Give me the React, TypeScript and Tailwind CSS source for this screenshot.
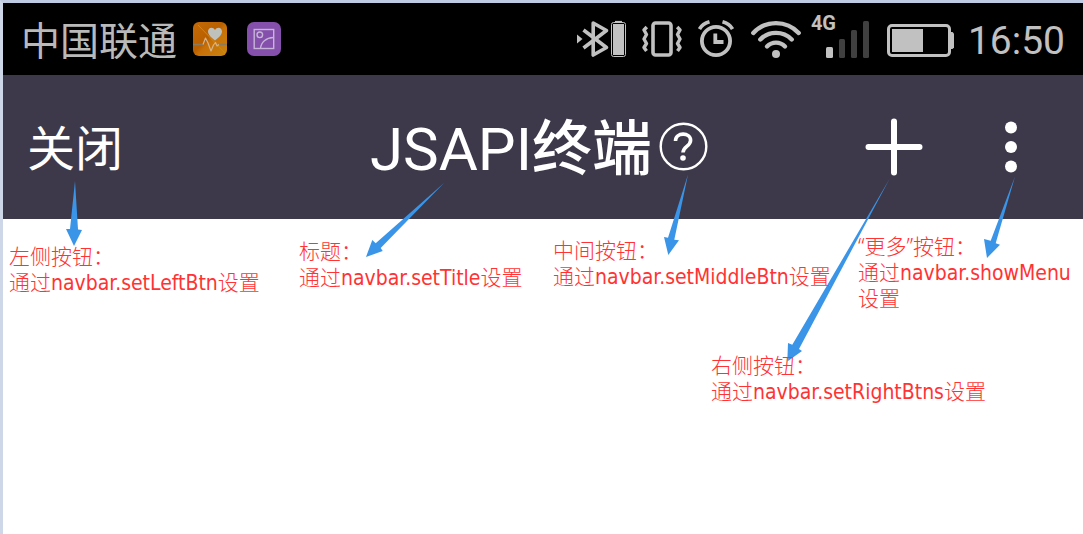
import React from "react";

type Line = { before?: string; api?: string; after?: string };
type Note = { id: string; place: string; lines: Line[] };

const notes: Note[] = [
  {
    id: "left",
    place: "left-[9px] top-[243px]",
    lines: [{ before: "左侧按钮：" }, { before: "通过", api: "navbar.setLeftBtn", after: "设置" }],
  },
  {
    id: "title",
    place: "left-[299px] top-[238px]",
    lines: [{ before: "标题：" }, { before: "通过", api: "navbar.setTitle", after: "设置" }],
  },
  {
    id: "middle",
    place: "left-[553px] top-[237px]",
    lines: [{ before: "中间按钮：" }, { before: "通过", api: "navbar.setMiddleBtn", after: "设置" }],
  },
  {
    id: "more",
    place: "left-[858px] top-[233px]",
    lines: [{ before: "“更多”按钮：" }, { before: "通过", api: "navbar.showMenu" }, { after: "设置" }],
  },
  {
    id: "right",
    place: "left-[711px] top-[352px]",
    lines: [{ before: "右侧按钮：" }, { before: "通过", api: "navbar.setRightBtns", after: "设置" }],
  },
];

const arrows = [
  "75,181 78,229.5 82,230 74,246 66,229 70,229",
  "444,183 380.7,248 382.7,251 366,257 372.3,240 375.7,243.3",
  "688,174.5 674.3,239.7 679,240.3 668.3,255 664,237 668,237.7",
  "1015,176.5 995.7,243.3 1000,244.7 987,258 984,239 990.7,240.7",
  "889.5,179 799,349 802,351 787.3,361.5 788,343 792.3,344.7",
];

function HealthIcon() {
  return (
    <svg className="size-[34px]" viewBox="0 0 34 34" aria-hidden="true">
      <defs>
        <linearGradient id="health" x1="0" y1="0" x2="1" y2="1">
          <stop offset="0" stopColor="#c56a05" />
          <stop offset="0.45" stopColor="#b95f00" />
          <stop offset="0.55" stopColor="#c87008" />
          <stop offset="1" stopColor="#c98410" />
        </linearGradient>
      </defs>
      <rect width="34" height="34" rx="6" fill="url(#health)" />
      <path d="M5 3 L32 31" stroke="#cf8a10" strokeWidth="1" />
      <path d="M0 22.5 H10 M26 22.5 H34" stroke="#8b7a5c" strokeWidth="1.4" />
      <path d="M10 22.5 L12.5 16 L15 21 L18 29 L20.5 23 L22.5 20.5 L24 24 L26 22.5" fill="none" stroke="#d5b48a" strokeWidth="1.2" strokeLinejoin="round" />
      <path d="M22 18.5 C19 16 15 13 15 9.5 C15 5.3 20 4.2 22 8 C24 4.2 29 5.3 29 9.5 C29 13 25 16 22 18.5 Z" fill="#bfc1bd" />
    </svg>
  );
}

function GalleryIcon() {
  return (
    <svg className="size-[34px]" viewBox="0 0 34 34" fill="none" stroke="#c7b4d8" strokeWidth="1.4" aria-hidden="true">
      <rect width="34" height="34" rx="7" fill="#8450ab" stroke="none" />
      <rect x="7.2" y="7.5" width="19.5" height="19" />
      <circle cx="12.8" cy="12.8" r="2.8" />
      <path d="M13.5 26.5 C14 20 19 15.8 26.5 15.5" />
    </svg>
  );
}

function BluetoothIcon() {
  return (
    <svg className="h-10 w-[50px]" viewBox="0 0 50 40" fill="none" stroke="#c1c1c1" aria-hidden="true">
      <path d="M1 15.5 L6.5 20 L1 24.5 Z" fill="#c1c1c1" stroke="none" />
      <path d="M7.5 11 L30.5 28.5 L17.2 36 V4 L30.5 11.5 L7.5 29" strokeWidth="3.6" strokeLinejoin="round" />
      <rect x="35.5" y="3.5" width="14" height="34" rx="2" strokeWidth="1" />
      <path d="M39 2.5 H46" strokeWidth="1.2" />
      <rect x="37" y="5" width="11" height="31" fill="#c1c1c1" stroke="none" />
    </svg>
  );
}

function VibrateIcon() {
  return (
    <svg className="h-10 w-10" viewBox="0 0 40 40" fill="none" stroke="#c1c1c1" strokeWidth="3.6" strokeLinejoin="round" aria-hidden="true">
      <rect x="11" y="4" width="18" height="32" rx="2.5" />
      <path d="M4.8 8 L2 11 L4.5 15.5 L2 20 L4.5 24.5 L2 28.5 L4.5 32" strokeWidth="3.4" />
      <path d="M35.2 8 L38 11 L35.5 15.5 L38 20 L35.5 24.5 L38 28.5 L35.5 32" strokeWidth="3.4" />
    </svg>
  );
}

function AlarmIcon() {
  return (
    <svg className="h-10 w-9" viewBox="0 0 36 40" fill="none" stroke="#c1c1c1" strokeWidth="3.8" aria-hidden="true">
      <circle cx="18" cy="22" r="14.1" />
      <path d="M17.3 14.5 V23 H25.5" />
      <path d="M1.5 10 Q4.5 4.8 11.5 2.8" strokeWidth="3.6" />
      <path d="M34.5 10 Q31.5 4.8 24.5 2.8" strokeWidth="3.6" />
    </svg>
  );
}

function WifiIcon() {
  return (
    <svg className="h-10 w-[52px]" viewBox="0 0 52 40" fill="none" stroke="#c1c1c1" strokeWidth="4.4" strokeLinecap="round" aria-hidden="true">
      <path d="M3.3 14 A31 31 0 0 1 48.7 14" />
      <path d="M10.3 20.5 A22 22 0 0 1 41.7 20.5" />
      <path d="M17 27.5 A12.5 12.5 0 0 1 35 27.5" />
      <circle cx="26" cy="35" r="4" fill="#c1c1c1" stroke="none" />
    </svg>
  );
}

function Signal() {
  return (
    <div className="relative">
      <span className="absolute left-0 -top-1.5 text-xl leading-5 font-bold">4G</span>
      <svg className="h-10 w-[60px]" viewBox="0 0 60 40" fill="#404040" aria-hidden="true">
        <rect x="15" y="28" width="7" height="11" rx="1.5" fill="#c1c1c1" />
        <rect x="28" y="20" width="6" height="19" rx="1.5" />
        <rect x="40" y="11" width="6" height="28" rx="1.5" />
        <rect x="52" y="2" width="6" height="37" rx="1.5" />
      </svg>
    </div>
  );
}

function BatteryIcon() {
  return (
    <svg className="h-10 w-[67px]" viewBox="0 0 67 40" fill="#c1c1c1" aria-hidden="true">
      <rect x="1.5" y="6.5" width="61" height="30" rx="3.5" fill="none" stroke="#c1c1c1" strokeWidth="3" />
      <rect x="5" y="10" width="31" height="23" />
      <path d="M63 13 H65.5 L67 14.5 V28.5 L65.5 30 H63 Z" />
    </svg>
  );
}

function StatusBar() {
  return (
    <header className="flex h-[72px] items-center justify-between bg-black px-[18px] text-[#b9b9b9]">
      <div className="flex items-center gap-5">
        <span className="-mr-1 pt-1.5 text-[39px] leading-[48px]">中国联通</span>
        <HealthIcon />
        <GalleryIcon />
      </div>
      <div className="flex items-center gap-[14px] text-[#c1c1c1]">
        <div className="flex items-center gap-4">
          <BluetoothIcon />
          <VibrateIcon />
          <AlarmIcon />
          <div className="flex items-center gap-[9px]">
            <WifiIcon />
            <Signal />
          </div>
          <BatteryIcon />
        </div>
        <time className="pt-1 text-[39px] leading-[48px]">16:50</time>
      </div>
    </header>
  );
}

function NavBar() {
  return (
    <nav className="grid h-36 grid-cols-[1fr_auto_1fr] items-center bg-[#3e394a] pr-2 text-white">
      <button type="button" className="ml-6 justify-self-start pt-1.5 text-5xl">
        关闭
      </button>
      <div className="flex items-center gap-1.5">
        <h1 className="pt-1.5 text-[60px] leading-[72px]">
          JSAPI<span className="font-medium">终端</span>
        </h1>
        <button type="button" aria-label="帮助">
          <svg className="size-[50px]" viewBox="0 0 50 50" fill="none" stroke="#fff">
            <circle cx="25.5" cy="24.5" r="22.8" strokeWidth="2.4" />
            <path d="M17.5 19 C17.5 10 32.6 10 32.6 18.2 C32.6 24.4 25 24.2 25 30.5" strokeWidth="3.6" />
            <circle cx="25" cy="36" r="2.8" fill="#fff" stroke="none" />
          </svg>
        </button>
      </div>
      <div className="mr-[58px] flex items-center gap-[82px] justify-self-end">
        <button type="button" aria-label="添加">
          <svg className="size-[58px]" viewBox="0 0 58 58" stroke="#fff" strokeWidth="6" strokeLinecap="round">
            <path d="M29 3.5 V54.5 M3.5 29 H54.5" />
          </svg>
        </button>
        <button type="button" aria-label="更多">
          <svg className="h-[52px] w-3" viewBox="0 0 12 52" fill="#fff">
            <circle cx="6" cy="6.5" r="6" />
            <circle cx="6" cy="26" r="6" />
            <circle cx="6" cy="45.5" r="6" />
          </svg>
        </button>
      </div>
    </nav>
  );
}

export default function App() {
  return (
    <div className="relative min-h-screen overflow-hidden border-t-3 border-l-3 border-t-[#bfcbe2] border-l-[#cdd7e8] bg-white font-[Roboto,'Noto_Sans_CJK_SC',sans-serif]">
      <StatusBar />
      <NavBar />
      <div className="absolute -top-[3px] -left-[3px]">
        <svg className="h-[380px] w-[1083px]" viewBox="0 0 1083 380" fill="#3a95e8" aria-hidden="true">
          {arrows.map((points) => (
            <polygon key={points} points={points} />
          ))}
        </svg>
        {notes.map((note) => (
          <p
            key={note.id}
            className={`absolute font-['Noto_Sans','Noto_Sans_CJK_SC',sans-serif] text-[21px] leading-[26px] font-light whitespace-nowrap text-[#ff3333] ${note.place}`}
          >
            {note.lines.map((line, index) => (
              <span key={index} className="block h-[26px]">
                {line.before}
                {line.api && (
                  <span className="font-['DejaVu_Sans_Condensed',sans-serif] font-normal">{line.api}</span>
                )}
                {line.after}
              </span>
            ))}
          </p>
        ))}
      </div>
    </div>
  );
}
